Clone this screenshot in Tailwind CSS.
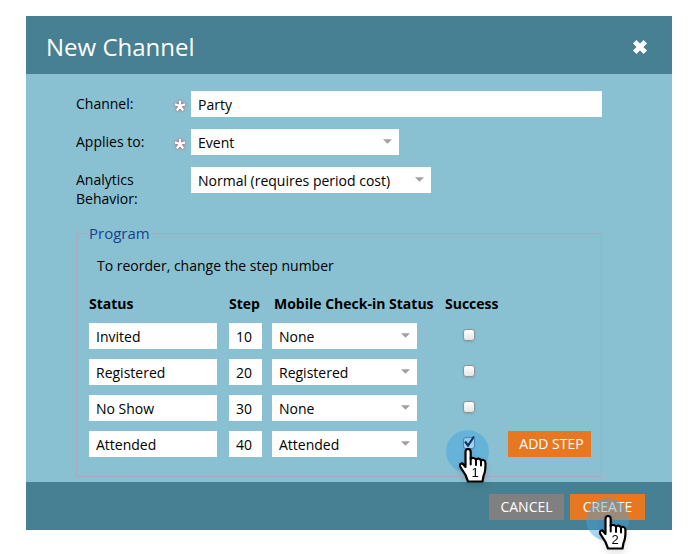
<!DOCTYPE html>
<html lang="en">
<head>
<meta charset="utf-8">
<title>New Channel</title>
<script src="https://cdn.jsdelivr.net/npm/@tailwindcss/browser@4"></script>
</head>
<body class="min-h-screen bg-white pt-4 pl-[26px] pr-6 font-['Open_Sans','Noto_Sans',sans-serif] text-sm text-black">
<svg class="hidden" aria-hidden="true">
  <symbol id="hand" viewBox="0 0 30 36">
    <path d="M9 2C7 2 6.500 3.500 6.500 5V20L4.500 17.500C3 15.500 -.5 17 1.300 19.800L6.500 28L9 34.500H23.500L24.500 29C26.500 25 26.700 22 26.400 15.500C26.200 12.500 23 12.300 22 14C21.500 11 18 11 17 12.800C16 10.500 12.600 10.500 11.700 12V5C11.700 3.500 11 2 9 2Z" fill="#fff" stroke="#000" stroke-width="2.200" stroke-linejoin="round"/>
    <path d="M11.700 11V17.500M17 12.500V18M22 14V18.500" fill="none" stroke="#000" stroke-width="2" stroke-linecap="round"/>
  </symbol>
  <symbol id="required" viewBox="0 0 12 12">
    <path d="M6 6V.8M6 6L11 4.400M6 6L9.200 10.500M6 6L2.800 10.500M6 6L1 4.400" stroke="#fff" stroke-width="2.200"/>
  </symbol>
</svg>
<main class="bg-[#89c1d3]">
  <header class="flex h-[58px] items-center justify-between bg-[#468092] pr-6 pl-5 pt-1">
    <h1 class="text-2xl text-white">New Channel</h1>
    <button type="button" aria-label="Close" class="text-white">
      <svg class="block size-4" viewBox="0 0 16 16"><path d="M2.700 2.700L13.300 13.300M13.300 2.700L2.700 13.300" stroke="currentColor" stroke-width="4.800"/></svg>
    </button>
  </header>
  <form>
    <div class="px-[50px] pt-[17px] pr-[70px] pb-[5px]">
      <div class="grid grid-cols-[98px_17px_1fr] gap-y-3">
        <label for="channel" class="pt-[3px] leading-[19px]">Channel:</label>
        <svg class="mt-[9px] size-3 overflow-visible drop-shadow-[0_0_1px_#c83030]"><use href="#required"/></svg>
        <input id="channel" value="Party" class="h-[26px] w-full bg-white px-[7px]">
        <label for="applies" class="pt-[3px] leading-[19px]">Applies to:</label>
        <svg class="mt-[9px] size-3 overflow-visible drop-shadow-[0_0_1px_#c83030]"><use href="#required"/></svg>
        <div class="relative w-52"><select id="applies" class="block h-[26px] w-full appearance-none bg-white px-[7px] pt-[2px]"><option>Event</option></select><svg class="pointer-events-none absolute top-[10px] right-[7px] h-[5px] w-[9px]" viewBox="0 0 8 4"><path d="M0 0H8L4 4Z" fill="#a0a0a0"/></svg></div>
        <label for="behavior" class="pt-[3px] leading-[19px]">Analytics Behavior:</label>
        <span></span>
        <div class="relative w-60"><select id="behavior" class="block h-[26px] w-full appearance-none bg-white px-[7px] pt-[2px]"><option>Normal (requires period cost)</option></select><svg class="pointer-events-none absolute top-[10px] right-[7px] h-[5px] w-[9px]" viewBox="0 0 8 4"><path d="M0 0H8L4 4Z" fill="#a0a0a0"/></svg></div>
      </div>
      <fieldset class="mt-[15px] border border-[#acabbd] pr-[10px] pb-[19px] pl-3">
        <legend class="-ml-[2px] px-[2px] text-[15px] leading-5 text-[#17428c]">Program</legend>
        <p class="mt-[13px] ml-2 leading-5">To reorder, change the step number</p>
        <div class="flex items-end">
          <table class="mt-[7px] w-[409px] table-fixed border-collapse text-left">
            <thead><tr class="h-10">
              <th class="w-[140px] pt-[2px]">Status</th><th class="w-[43px] pt-[2px]">Step</th><th class="w-[173px] pt-[2px] pl-[2px] whitespace-nowrap">Mobile Check-in Status</th><th class="pt-[2px]">Success</th>
            </tr></thead>
            <tbody id="steps"></tbody>
          </table>
          <button type="button" class="ml-[10px] h-[26px] w-[83px] shrink-0 bg-[#e87722] pl-1 text-white">ADD STEP</button>
        </div>
      </fieldset>
    </div>
    <footer class="flex h-12 items-center justify-end gap-[6px] bg-[#468092] pr-[27px] pt-px">
      <button type="button" class="h-[26px] w-[75px] bg-[#808080] text-white">CANCEL</button>
      <button type="submit" class="relative h-[26px] w-[75px] bg-[#e87722] text-white">CREATE
        <span class="pointer-events-none absolute top-1 left-4 size-[43px] rounded-full bg-[#44a5e0]/45"></span>
        <svg class="pointer-events-none absolute top-5 left-[29px] h-9 w-[30px] overflow-visible drop-shadow-md" viewBox="0 0 30 36"><use href="#hand"/><text x="16" y="30" text-anchor="middle" font-family="Liberation Sans" font-size="13" fill="#000">2</text></svg>
      </button>
    </footer>
  </form>
</main>
<template id="row">
  <tr class="h-9 align-top">
    <td><input aria-label="Status" class="block h-[26px] w-32 bg-white px-[7px]"></td>
    <td><input aria-label="Step" class="block h-[26px] w-[33px] bg-white px-[7px]"></td>
    <td><div class="relative w-[145px]"><select aria-label="Mobile Check-in Status" class="block h-[26px] w-full appearance-none bg-white px-[7px] pt-[2px]"><option></option></select><svg class="pointer-events-none absolute top-[10px] right-[7px] h-[5px] w-[9px]" viewBox="0 0 8 4"><path d="M0 0H8L4 4Z" fill="#a0a0a0"/></svg></div></td>
    <td class="relative"><input type="checkbox" aria-label="Success" class="mt-[6px] ml-[18px] block size-3 appearance-none rounded-[3px] border border-[#8a9499] bg-linear-to-b from-white to-[#e4e4e4] shadow-sm checked:border-[#4a87b5] checked:from-[#a8d4f5] checked:to-[#7dbdec]"></td>
  </tr>
</template>
<template id="pointer">
  <span class="pointer-events-none absolute -top-px left-px size-[43px] rounded-full bg-[#44a5e0]/50"></span>
  <span class="pointer-events-none absolute top-[6px] left-[18px] size-3 rounded-[3px] border border-[#4a87b5] bg-linear-to-b from-[#8cc8ee] to-[#a8d8f8]"></span>
  <svg class="pointer-events-none absolute top-1 left-[17px] size-4" viewBox="0 0 16 16"><path d="M3 6.500L6 10.500L12 1.500" fill="none" stroke="#12345c" stroke-width="2.200"/></svg>
  <svg class="pointer-events-none absolute top-4 left-[14px] h-9 w-[30px] overflow-visible drop-shadow-md" viewBox="0 0 30 36"><use href="#hand"/><text x="16" y="30" text-anchor="middle" font-family="Liberation Sans" font-size="13">1</text></svg>
</template>
<script>
const steps = [["Invited", 10, "None"], ["Registered", 20, "Registered"], ["No Show", 30, "None"], ["Attended", 40, "Attended", true]];
for (const [status, step, mobile, success] of steps) {
  const row = document.getElementById("row").content.cloneNode(true);
  const [a, b, c] = row.querySelectorAll("input");
  a.value = status; b.value = step; c.checked = !!success;
  row.querySelector("option").textContent = mobile;
  if (success) {
    row.querySelector("tr").className = "h-[26px] align-top";
    c.parentElement.append(document.getElementById("pointer").content.cloneNode(true));
  }
  document.getElementById("steps").append(row);
}
</script>
</body>
</html>
